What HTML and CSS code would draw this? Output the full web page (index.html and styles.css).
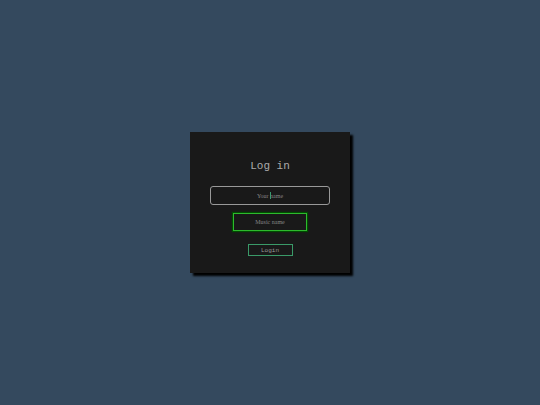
FILE: index.html
```html
<!DOCTYPE html>
<html lang="en">
<head>
  <meta charset="UTF-8">
  <meta name="viewport" content="width=device-width, initial-scale=1.0">
  <title>Log in</title>
  <link rel="stylesheet" href="styles.css">
</head>
<body>
  <form class="box">
    <h1>Log in</h1>
    <div class="field">
      <input class="active" type="text" name="username" placeholder="Your name" aria-label="Your name">
      <span class="caret"></span>
    </div>
    <input type="text" name="music" placeholder="Music name" aria-label="Music name">
    <button type="submit">Login</button>
  </form>
</body>
</html>
```

FILE: styles.css
```css
* {
  box-sizing: border-box;
}
body {
  margin: 0;
  min-height: 100vh;
  display: flex;
  align-items: center;
  justify-content: center;
  background: #34495e;
}
.box {
  width: 160px;
  padding: 26px 20px 17px;
  display: flex;
  flex-direction: column;
  align-items: center;
  background: #191919;
  box-shadow: 3px 3px 2px #000;
}
h1 {
  margin: 0 0 12px;
  font-family: "Courier New", "Liberation Mono", monospace;
  font-size: 11px;
  font-weight: normal;
  line-height: 16px;
  color: #aaa;
}
.field {
  position: relative;
  width: 100%;
  margin-bottom: 8px;
  display: flex;
  justify-content: center;
}
input {
  width: 74px;
  height: 18px;
  padding: 0;
  border: 1px solid #2eb82e;
  border-radius: 0;
  outline: none;
  background: none;
  box-shadow: 0 0 1px 1px #004d00;
  font-family: "Liberation Serif", serif;
  font-size: 6px;
  text-align: center;
  color: #fff;
}
input::placeholder {
  color: #858585;
}
input.active {
  width: 100%;
  height: 19px;
  border-color: #999;
  border-radius: 3px;
  box-shadow: none;
}
.caret {
  position: absolute;
  top: 6px;
  left: 50%;
  width: 1px;
  height: 7px;
  background: #3a9a70;
}
button {
  width: 45px;
  height: 12px;
  margin-top: 13px;
  padding: 1px 0 0;
  border: 1px solid #3a9a68;
  background: none;
  font-family: "Courier New", "Liberation Mono", monospace;
  font-size: 6px;
  line-height: 9px;
  color: #999;
  cursor: pointer;
}
```
